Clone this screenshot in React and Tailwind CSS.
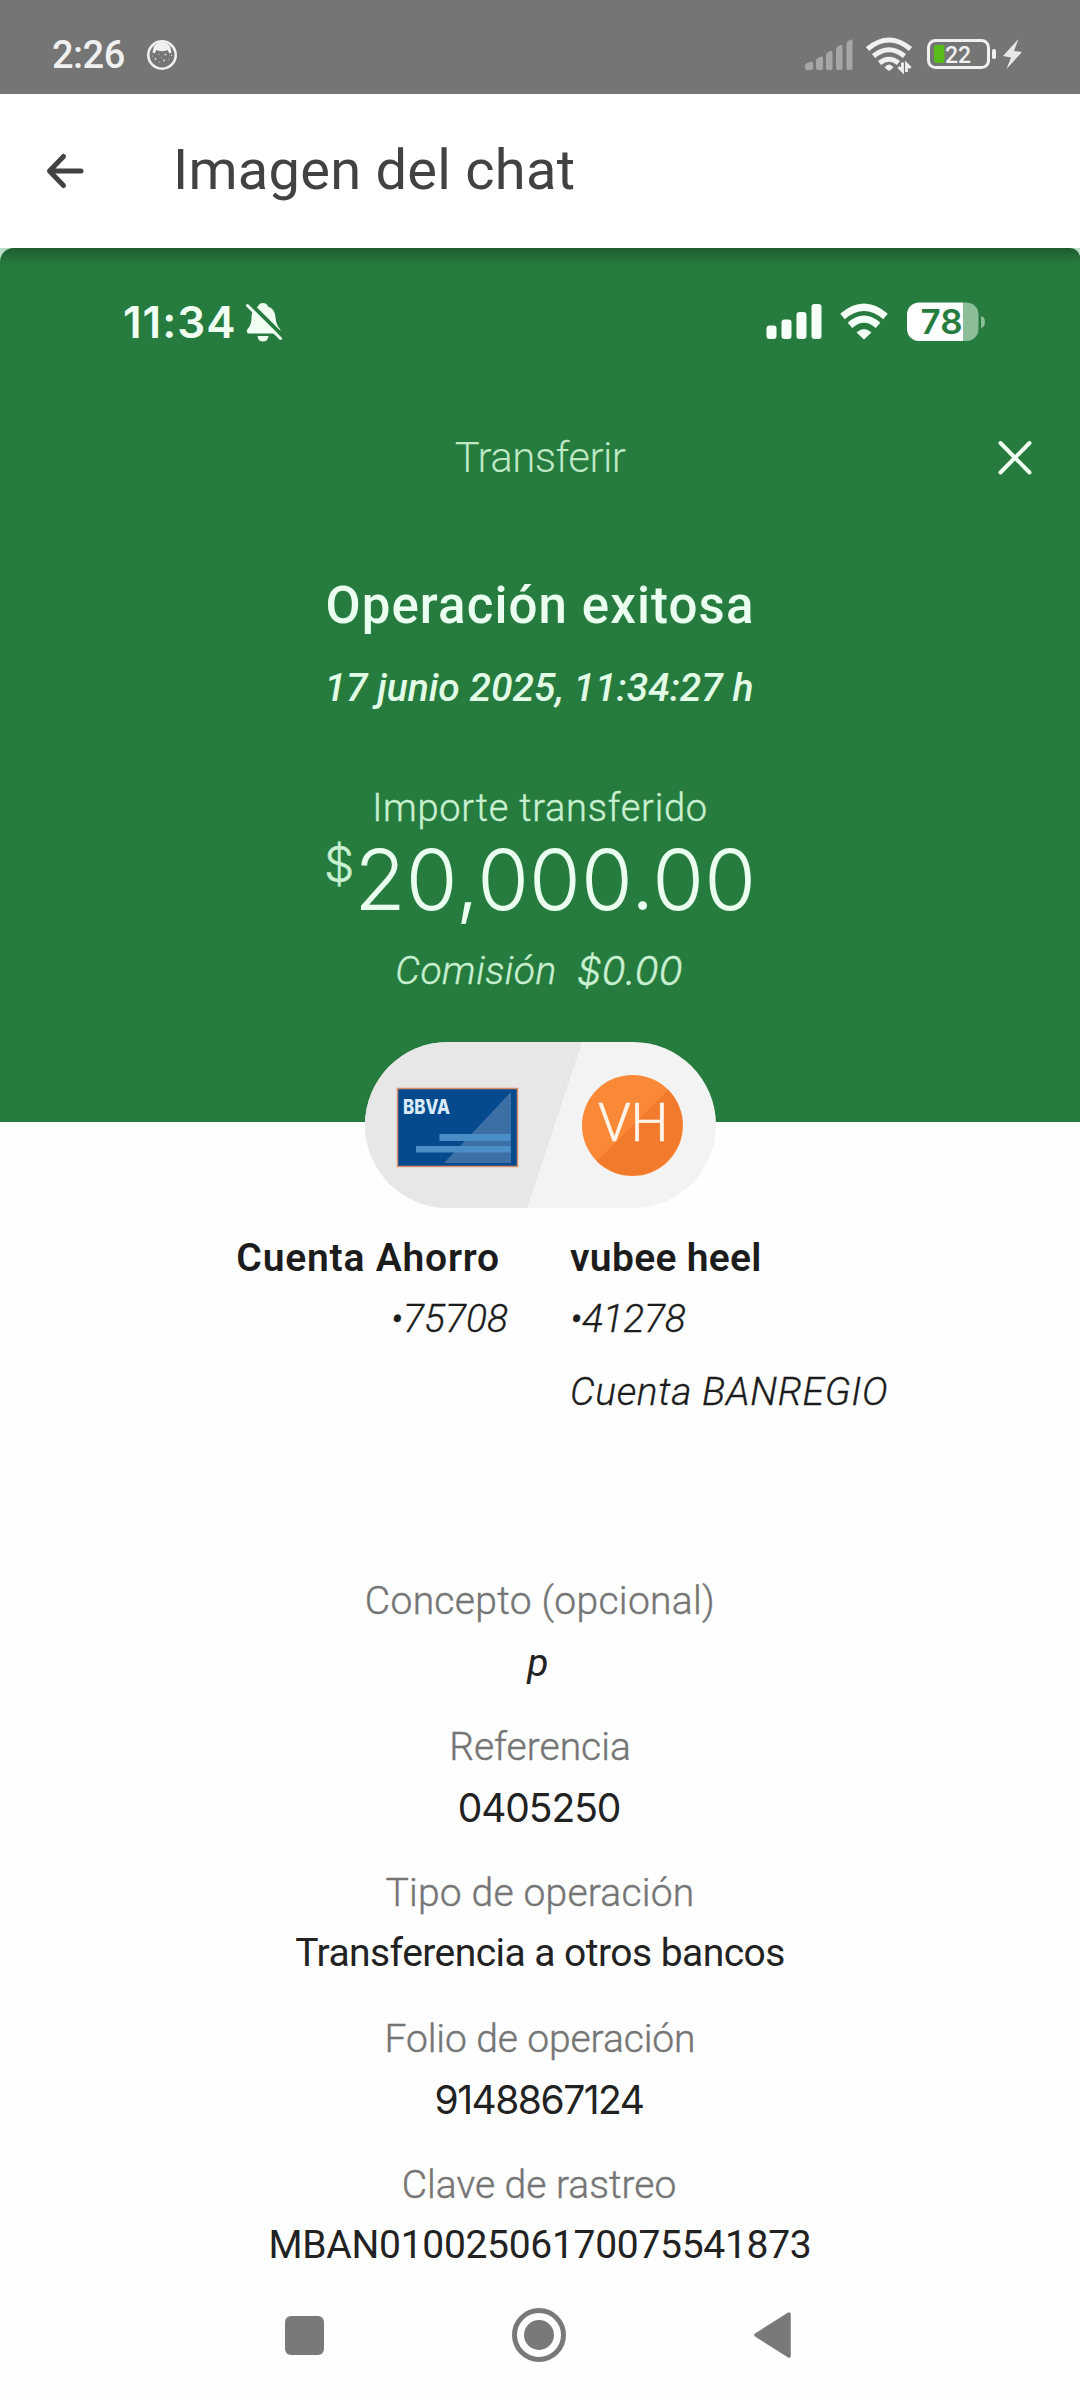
import React from 'react';

const details = [
  { label: 'Concepto (opcional)', value: 'p', labelClass: 'tracking-[0.3px]', valueClass: 'italic pr-[4px] relative top-0.5' },
  { label: 'Referencia', value: '0405250', labelClass: '', valueClass: "font-['Inter',sans-serif] tracking-[-1.1px] pr-[2px]" },
  { label: 'Tipo de operación', value: 'Transferencia a otros bancos', labelClass: 'tracking-[0.2px]', valueClass: 'tracking-[-0.55px]' },
  { label: 'Folio de operación', value: '9148867124', labelClass: 'tracking-[-0.1px]', valueClass: "font-['Inter',sans-serif] tracking-[-1.5px] pr-[2px]" },
  { label: 'Clave de rastreo', value: 'MBAN01002506170075541873', labelClass: 'pr-[2px]', valueClass: 'tracking-[-0.3px]' },
];

function FaceIcon() {
  return (
    <svg className="ml-[21px] w-8 h-8" viewBox="0 0 32 32">
      <circle cx="16" cy="16" r="13.7" fill="none" stroke="#f0f0f0" strokeWidth="2.6" />
      <path d="M8 7 Q16 -1 24 7 L25.5 13.5 L23.5 14.5 L21.5 11 Q16 13.5 10.5 11 L8.5 14.5 L6.5 13.5 Z" fill="#f0f0f0" />
      <g fill="#e0e0e0">
        <circle cx="9.5" cy="20" r="0.9" />
        <circle cx="13" cy="15.5" r="0.6" />
        <circle cx="18" cy="21.5" r="0.9" />
        <circle cx="19.5" cy="15.5" r="0.9" />
        <circle cx="23" cy="20" r="0.6" />
        <circle cx="13.5" cy="23" r="0.6" />
        <circle cx="25.5" cy="16.5" r="0.7" />
        <circle cx="15.5" cy="18.5" r="0.5" />
        <circle cx="6.5" cy="17" r="0.5" />
      </g>
    </svg>
  );
}

function PhoneStatusIcons() {
  return (
    <svg className="w-[220px] h-[94px]" viewBox="804 0 220 94">
      <g fill="#a6a6a6">
        <path d="M805 68 V65.5 Q805 64 807 63 L811 61.8 Q813 61.5 813 63 V68 Q813 70 811 70 H807 Q805 70 805 68 Z" />
        <path d="M816 68 V60 Q816 59 818 58 L821 56.6 Q823 56 823 58 V68 Q823 70 821 70 H818 Q816 70 816 68 Z" />
        <path d="M826 68 V55 Q826 53.5 828 52.3 L830.5 51 Q832.5 50.3 832.5 52.5 V68 Q832.5 70 830.5 70 H828 Q826 70 826 68 Z" />
        <path d="M836 68 V49.5 Q836 47.5 838 46.3 L840.5 45.2 Q842.5 44.5 842.5 46.5 V68 Q842.5 70 840.5 70 H838 Q836 70 836 68 Z" />
        <path d="M846.5 68 V44 Q846.5 42 848 41 L850.5 39.6 Q852.5 39 852.5 41 V68 Q852.5 70 850.5 70 H848.5 Q846.5 70 846.5 68 Z" />
      </g>
      <g fill="none" stroke="#f0f0f0" strokeWidth="5">
        <path d="M867.5 49 Q889 31 910.5 49" />
        <path d="M873.5 56 Q889 43.5 904.5 56" />
        <path d="M879.5 63 Q889 55.5 898.5 63" />
      </g>
      <path d="M889 71 L884.5 67.5 Q889 61.5 893.5 67.5 Z" fill="#f0f0f0" />
      <g fill="none" stroke="#f0f0f0" strokeWidth="2.8">
        <path d="M902.5 62.5 V71 L898.5 67" />
        <path d="M906.5 72 V64 L910.5 68" />
      </g>
      <rect x="928.5" y="40.5" width="60" height="27" rx="7" fill="none" stroke="#f0f0f0" strokeWidth="3" />
      <rect x="934" y="45" width="10.5" height="18" rx="2" fill="#58bd1b" />
      <rect x="992" y="49" width="4" height="10" rx="1.8" fill="#f0f0f0" />
      <text x="945" y="63" fontSize="23" fontFamily="Roboto, sans-serif" fontWeight="500" fill="#f0f0f0">22</text>
      <path d="M1018.5 39 L1003 56 L1011 57.5 L1006.5 69 L1022 52 L1014 51 Z" fill="#e8e8e8" />
    </svg>
  );
}

function BellOff() {
  return (
    <svg className="ml-[7px] w-[40px] h-[42px]" viewBox="244 301 40 42">
      <path
        d="M263 303 Q267 303 268 306.5 Q275 309 275.5 317 Q276 325 280 329 Q281.5 333 278 333.5 H249 Q245.5 333 247.5 329 Q251.5 325 251.5 318 Q251.5 309 258 306.5 Q259 303 263 303 Z"
        fill="#f0fff2"
      />
      <path d="M257.5 336 H268.5 Q268 341.5 263 341.5 Q258 341.5 257.5 336 Z" fill="#f0fff2" />
      <path d="M249 302.5 L283 336" stroke="#267b3e" strokeWidth="4" />
      <path d="M247.5 305.5 L280.5 338.5" stroke="#f0fff2" strokeWidth="3" strokeLinecap="round" />
    </svg>
  );
}

function CaptureStatusIcons() {
  return (
    <svg className="w-[222px] h-[42px]" viewBox="765 300 222 42">
      <g fill="#f6fff7">
        <rect x="766.5" y="324.5" width="10" height="13.5" rx="3" />
        <rect x="781.5" y="318.5" width="10" height="19.5" rx="3" />
        <rect x="796.5" y="311" width="10" height="27" rx="3" />
        <rect x="811.5" y="303" width="10" height="35" rx="3" />
      </g>
      <g fill="none" stroke="#f6fff7" strokeWidth="7">
        <path d="M842.5 315.5 Q864 297 885.5 315.5" />
        <path d="M850 324.3 Q864 312 878 324.3" />
      </g>
      <path d="M864 338.5 L856.5 331.5 Q864 324.5 871.5 331.5 Z" fill="#f6fff7" />
      <clipPath id="battery">
        <rect x="907" y="301.5" width="71.5" height="38.5" rx="12" />
      </clipPath>
      <g clipPath="url(#battery)">
        <rect x="907" y="301" width="56" height="40" fill="#ffffff" />
        <rect x="963" y="301" width="16" height="40" fill="#8bbd99" />
      </g>
      <path d="M981 315 Q985 316 985 321 Q985 326 981 327 Z" fill="#8bbd99" />
      <text x="920.5" y="333" fontSize="34" fontFamily="Inter, sans-serif" fontWeight="600" textLength="42" lengthAdjust="spacingAndGlyphs" fill="#267b3e">78</text>
    </svg>
  );
}

function AccountsPill() {
  return (
    <svg className="relative left-px mx-auto -mt-20 block shrink-0 w-[352px] h-[166px]" viewBox="365 1042 352 166">
      <clipPath id="pill">
        <rect x="365" y="1042" width="351" height="166" rx="83" />
      </clipPath>
      <g clipPath="url(#pill)">
        <rect x="365" y="1042" width="352" height="166" fill="#f3f3f3" />
        <path d="M365 1042 H582 L527 1208 H365 Z" fill="#e7e7e7" />
      </g>
      <rect x="397.5" y="1088.5" width="120" height="78" fill="#044a8c" stroke="#d98e6c" strokeWidth="1.5" />
      <path d="M511 1092 V1163 H444 Z" fill="#3c6fa6" />
      <rect x="439.5" y="1134" width="71" height="7" fill="#4a8ec8" />
      <rect x="416" y="1146" width="94.5" height="6.5" fill="#4a8ec8" />
      <text x="403" y="1114" fontSize="20" fontFamily="Inter, sans-serif" fontWeight="800" textLength="47" lengthAdjust="spacingAndGlyphs" fill="#d9ebfb">BBVA</text>
      <circle cx="632.5" cy="1125.5" r="50.5" fill="#f98837" />
      <path d="M596.8 1161.2 A50.5 50.5 0 0 0 668.2 1089.8 Z" fill="#f27a2c" />
      <text x="598" y="1141" fontSize="53" fontFamily="Roboto, sans-serif" fontWeight="300" stroke="#fff5ea" strokeWidth="0.6" fill="#fff5ea">VH</text>
    </svg>
  );
}

export default function App() {
  return (
    <div className="w-[1080px] h-[2400px] bg-[#fefefe] overflow-hidden font-['Roboto',sans-serif] flex flex-col">
      <div className="h-[94px] shrink-0 bg-[#757575] flex items-center justify-between pl-[52px] pr-14">
        <div className="flex items-center pt-[15px]">
          <span className="text-[38px] leading-none font-medium text-[#f0f0f0] tracking-[-0.5px]">2:26</span>
          <FaceIcon />
        </div>
        <PhoneStatusIcons />
      </div>

      <div className="h-[154px] shrink-0 bg-white flex items-center">
        <svg className="ml-[45px] w-10 h-10" viewBox="0 0 40 40" fill="none" stroke="#424242" strokeWidth="5" strokeLinecap="round" strokeLinejoin="round">
          <path d="M18.5 5.5 L4.5 20 L18.5 34.5 M5 20 H36" />
        </svg>
        <h1 className="ml-[88px] pb-[3px] text-[56px] leading-none tracking-[0.25px] text-[#424242]">Imagen del chat</h1>
      </div>

      <div className="bg-[#b9dcc4] shrink-0">
        <div className="relative h-[874px] bg-[#267b3e] rounded-tl-[14px] rounded-tr-[10px] overflow-hidden flex flex-col items-center">
          <div className="absolute inset-x-0 top-0 h-4 bg-gradient-to-b from-black/25 to-transparent" />

          <div className="mt-[53px] h-[42px] w-full flex items-center justify-between pl-[123px] pr-[93px]">
            <div className="flex items-center">
              <span className="font-['Inter',sans-serif] text-[44px] leading-none font-semibold tracking-[1px] text-[#f0fff2]">11:34</span>
              <BellOff />
            </div>
            <CaptureStatusIcons />
          </div>

          <div className="mt-[85px] h-[60px] w-full flex items-center">
            <span className="w-[82px]" />
            <span className="flex-1 text-center text-[42px] leading-[60px] font-light tracking-[-0.6px] text-[#bfe8c5]">Transferir</span>
            <svg className="mr-[48px] w-[34px] h-[36px]" viewBox="998 440 34 36" fill="none" stroke="#f0fff2" strokeWidth="4" strokeLinecap="round">
              <path d="M1000.5 443 L1029.5 472.5 M1029.5 443 L1000.5 472.5" />
            </svg>
          </div>

          <p className="mt-[83px] text-[51px] leading-[70px] font-medium tracking-[1.1px] text-[#eafff0]">Operación exitosa</p>
          <p className="mt-[17px] pr-[2px] text-[39px] leading-[60px] font-medium italic text-[#e2fbe6]">17 junio 2025, 11:34:27 h</p>
          <p className="mt-[60px] text-[38px] leading-[60px] font-light tracking-[0.75px] text-[#c9f0d0] [-webkit-text-stroke:0.4px]">Importe transferido</p>
          <div className="mt-px h-[82px] flex items-start font-['Inter',sans-serif] font-light">
            <span className="text-[48px] leading-[50px] text-[#c9f0d0] [-webkit-text-stroke:0.5px]">$</span>
            <span className="text-[84px] leading-[82px] text-[#eafff0]">20,000.00</span>
          </div>
          <div className="mt-[20px] pr-[2px] text-[39px] leading-[60px] font-light italic flex gap-[20px] text-[#c9f0d0] [-webkit-text-stroke:0.4px]">
            <span className="tracking-[0.5px]">Comisión</span>
            <span className="font-['Inter',sans-serif]">$0.00</span>
          </div>
        </div>
      </div>

      <AccountsPill />

      <div className="mt-[20px] flex text-[39px] leading-[61px] text-[#1c1c1c]">
        <div className="w-[508px] text-right">
          <p className="pr-[8px] font-semibold tracking-[0.8px]">Cuenta Ahorro</p>
          <p className="font-light italic [-webkit-text-stroke:0.3px]">•75708</p>
        </div>
        <div className="pl-[62px]">
          <p className="font-semibold tracking-[0.3px]">vubee heel</p>
          <p className="font-light italic [-webkit-text-stroke:0.3px] tracking-[-0.3px]">•41278</p>
          <p className="mt-[12px] font-light italic [-webkit-text-stroke:0.3px] tracking-[0.65px]">Cuenta BANREGIO</p>
        </div>
      </div>

      <div className="mt-[148px] flex flex-col gap-6 text-center text-[39px] leading-[61px]">
        {details.map((d) => (
          <div key={d.label}>
            <p className={`font-light [-webkit-text-stroke:0.4px] text-[#757575] ${d.labelClass}`}>{d.label}</p>
            <p className={`-mt-px mb-px text-[#222222] ${d.valueClass}`}>{d.value}</p>
          </div>
        ))}
      </div>

      <div className="mt-auto h-[121px] shrink-0 flex items-center pb-[9px]">
        <div className="ml-[285px] w-[39px] h-[39px] rounded-[6px] bg-[#797979]" />
        <div className="ml-[188px] w-[54px] h-[54px] rounded-full border-[5px] border-[#797979] flex items-center justify-center">
          <div className="w-[30px] h-[30px] rounded-full bg-[#797979]" />
        </div>
        <svg className="ml-[188px] w-[37px] h-[46px]" viewBox="0 0 37 46">
          <path d="M35 2 L2 23 L35 44 Z" fill="#797979" stroke="#797979" strokeWidth="3.5" strokeLinejoin="round" />
        </svg>
      </div>
    </div>
  );
}
